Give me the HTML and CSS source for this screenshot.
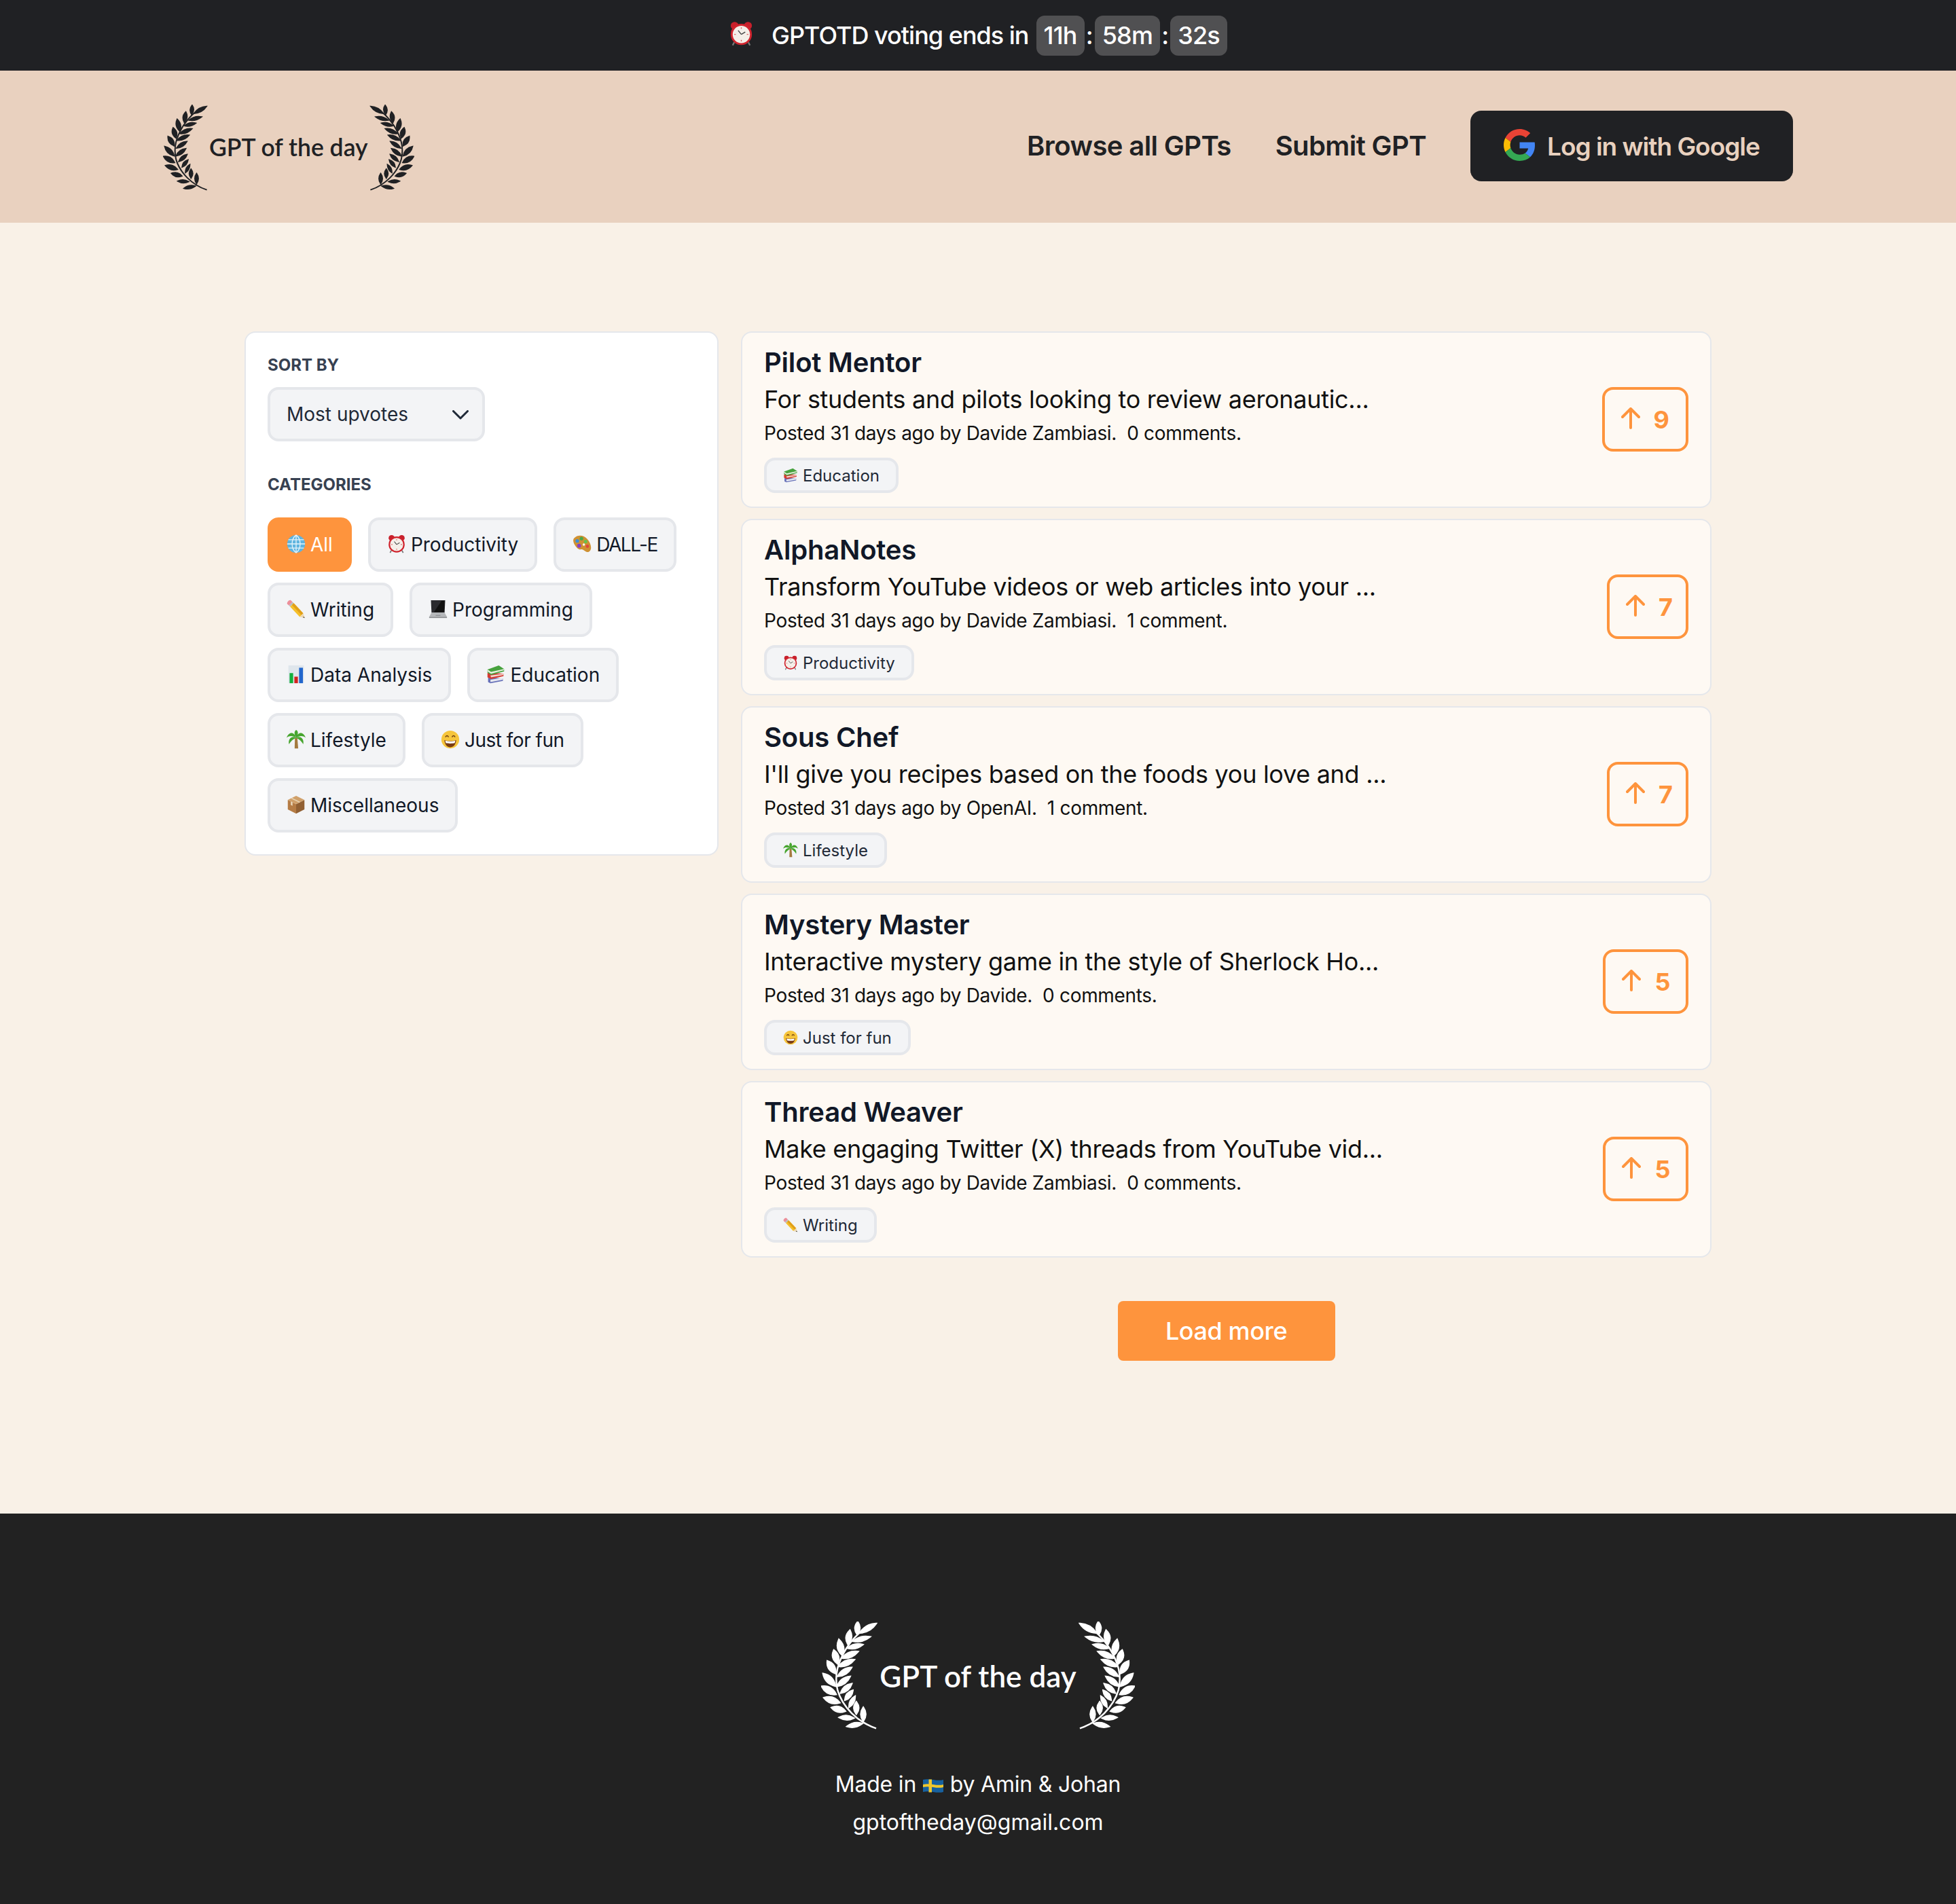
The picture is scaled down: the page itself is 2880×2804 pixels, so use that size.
FILE: index.html
```html
<!DOCTYPE html>
<html lang="en">
<head>
<meta charset="utf-8">
<title>GPT of the day</title>
<link rel="stylesheet" href="styles.css">
</head>
<body>
<svg class="defs" width="0" height="0" aria-hidden="true">
  <defs>
    <symbol id="wreath" viewBox="120 95 200 386">
      <path class="stem" d="M316 477C250 455 195 400 178 340C165 285 180 240 210 190C230 160 255 130 290 112"/>
      <path d="M258 135Q295 133 315 103Q279 105 258 135ZM248 140Q265 118 250 97Q233 118 248 140ZM235 165Q267 171 293 150Q260 144 235 165ZM215 175Q236 153 222 127Q200 148 215 175ZM215 190Q244 197 267 178Q238 170 215 190ZM195 215Q208 183 183 160Q169 191 195 215ZM195 225Q228 229 250 203Q216 199 195 225ZM178 245Q190 216 165 198Q152 226 178 245ZM183 255Q216 258 237 232Q204 228 183 255ZM170 280Q173 247 142 237Q139 269 170 280ZM180 290Q212 288 227 260Q195 261 180 290ZM170 325Q162 289 127 282Q134 317 170 325ZM178 325Q209 321 222 292Q190 295 178 325ZM172 355Q157 323 122 327Q137 358 172 355ZM190 350Q219 346 228 318Q199 322 190 350ZM185 385Q163 357 130 368Q151 395 185 385ZM205 375Q229 367 232 342Q207 349 205 375ZM220 400Q240 387 240 363Q219 375 220 400ZM205 415Q185 391 157 403Q176 426 205 415ZM245 425Q261 404 245 383Q229 404 245 425ZM235 440Q210 425 185 438Q210 453 235 440ZM270 450Q286 426 270 403Q254 426 270 450ZM265 460Q241 478 213 470Q236 451 265 460Z"/>
    </symbol>
    <symbol id="e-clock" viewBox="0 0 32 32">
      <circle cx="7.5" cy="6" r="5" fill="#c8202c"/><circle cx="24.5" cy="6" r="5" fill="#c8202c"/>
      <path d="M7 27l-2 4M25 27l2 4" stroke="#777" stroke-width="2"/>
      <circle cx="16" cy="17" r="13.500" fill="#d0242e"/><circle cx="16" cy="17" r="11" fill="#f4efe9"/>
      <path d="M16 17l-4-5M16 17l5-3" stroke="#444" stroke-width="1.2" fill="none"/>
      <path d="M16 8v2M16 24v2M7 17h2M23 17h2" stroke="#d66" stroke-width="1.2"/>
    </symbol>
    <symbol id="e-globe" viewBox="0 0 32 32">
      <circle cx="16" cy="16" r="15" fill="#5fb4df"/>
      <path d="M1 16h30M3 9h26M3 23h26M16 1v30M16 1c-9 7-9 23 0 30M16 1c9 7 9 23 0 30" stroke="#e4f3fa" stroke-width="1.5" fill="none"/>
    </symbol>
    <symbol id="e-palette" viewBox="0 0 32 32">
      <path d="M3 6c6-6 16-5 22 2s8 16 4 20-8 0-11-2-5 1-9-2S-2 11 3 6z" fill="#cf9133"/>
      <circle cx="8" cy="11" r="3" fill="#3c8fd8"/><circle cx="15" cy="7" r="3" fill="#4aa84a"/><circle cx="22" cy="12" r="3" fill="#6ac04a"/><circle cx="11" cy="19" r="3.300" fill="#8a3fc0"/><circle cx="25" cy="20" r="2.800" fill="#e0483c"/><circle cx="19" cy="17" r="2" fill="#fff"/>
    </symbol>
    <symbol id="e-pencil" viewBox="0 0 32 32">
      <path d="M1 7c-1-2 3-7 6-6l3 3-6 6z" fill="#ec8f9a"/><path d="M4 10l6-6 2 2-6 6z" fill="#b9bcc0"/>
      <path d="M6 12l6-6 16 17-6 6z" fill="#f5bf2a"/><path d="M9 9l3-3 16 17-3 3z" fill="#e09f1a"/>
      <path d="M22 29l6-6 3 8z" fill="#eed9b5"/><path d="M28.500 28.500l2.500 2.500-3.500-1z" fill="#333"/>
    </symbol>
    <symbol id="e-laptop" viewBox="0 0 32 32">
      <path d="M4 1h24l-1 21H5z" fill="#2a2a2e"/><path d="M22 2l5 0-1 19H9z" fill="#111"/><path d="M5 22h22l4 7H1z" fill="#b5b7ba"/><path d="M1 29h30v2H1z" fill="#8a8c8f"/><path d="M12 26h8v1.500h-8z" fill="#8f9194"/>
    </symbol>
    <symbol id="e-chart" viewBox="0 0 32 32">
      <path d="M3 1h26v30H3z" fill="#dfe6ec"/><path d="M5 14h6v17H5z" fill="#12b03c"/><path d="M13 20h6v11h-6z" fill="#d2231f"/><path d="M21 5h6.500v26H21z" fill="#2266cc"/>
    </symbol>
    <symbol id="e-books" viewBox="0 0 32 32">
      <path d="M3 22l3-1 22 2v4L7 31l-4-2z" fill="#6670b8"/><path d="M7 25l21-3v3L7 29z" fill="#e6e8f0"/>
      <path d="M2 14l4-1 23 2v4L8 24l-6-3z" fill="#d43b32"/><path d="M7 18l22-3v2L8 21z" fill="#f3d8d0"/>
      <path d="M2 8L21 1l9 6v4L8 17l-6-4z" fill="#47a23e"/><path d="M2 8l6 4L30 7v2L8 15l-6-4z" fill="#e8f0e0"/>
    </symbol>
    <symbol id="e-palm" viewBox="0 0 32 32">
      <path d="M14 13h4l1.500 18h-6z" fill="#a57a3f"/>
      <path d="M16 13C13 3 4 2 0 13c5-4 11-3 16 0zM16 13c3-10 12-11 16 0-5-4-11-3-16 0zM16 13C12 6 13 2 16 0c4 2 4 7 0 13zM16 13C9 9 2 15 4 24c3-5 7-9 12-11zM16 13c7-4 14 2 12 11-3-5-7-9-12-11z" fill="#47a52f"/>
    </symbol>
    <symbol id="e-grin" viewBox="0 0 32 32">
      <circle cx="16" cy="16" r="15" fill="#f6c53c"/>
      <path d="M6 17c5 2 15 2 20 0-1 8-5 12-10 12S7 25 6 17z" fill="#7a3b12"/><path d="M7.500 18c5 1.500 12 1.500 17 0l-1 4c-4 1-11 1-15 0z" fill="#fff"/>
      <path d="M8 12c1-3 4-3 5 0M19 12c1-3 4-3 5 0" stroke="#6a3a10" stroke-width="1.800" fill="none"/>
    </symbol>
    <symbol id="e-box" viewBox="0 0 32 32">
      <path d="M2 8l14 7v16L2 24z" fill="#b57c45"/><path d="M16 15l14-7v16l-14 7z" fill="#916033"/><path d="M2 8l14-7 14 7-14 7z" fill="#d0a06a"/><path d="M9 4.500l14 7-1.500 1L7 5.500z" fill="#e8d6b8"/><path d="M7 10.500l3 1.500v6l-3-1.500z" fill="#e8d6b8"/>
    </symbol>
    <symbol id="e-flag" viewBox="0 0 32 24">
      <path d="M1 3c10-3 20 3 30 0v18c-10 3-20-3-30 0z" fill="#17619f"/>
      <path d="M9.500 2.500h4.500v19H9.500z" fill="#f0c72c"/><path d="M1 10c10-3 20 3 30 0v4c-10 3-20-3-30 0z" fill="#f0c72c"/>
    </symbol>
    <symbol id="arrow" viewBox="0 0 28 32">
      <path d="M14 30V3M2 14L14 2l12 12" fill="none" stroke="currentColor" stroke-width="4" stroke-linecap="round" stroke-linejoin="round"/>
    </symbol>
  </defs>
</svg>

<div class="topbar">
  <svg class="top-emoji"><use href="#e-clock"/></svg>
  <span class="top-text">GPTOTD voting ends in</span>
  <span class="time">11h</span><span class="colon">:</span>
  <span class="time">58m</span><span class="colon">:</span>
  <span class="time">32s</span>
</div>

<header class="header">
  <a class="logo">
    <svg class="wreath"><use href="#wreath"/></svg>
    <span class="logo-text">GPT of the day</span>
    <svg class="wreath flip"><use href="#wreath"/></svg>
  </a>
  <nav class="nav">
    <a class="nav-link">Browse all GPTs</a>
    <a class="nav-link">Submit GPT</a>
    <a class="login">
      <svg class="g-icon" viewBox="0 0 48 48">
        <path fill="#EA4335" d="M24 9.500c3.540 0 6.710 1.220 9.210 3.600l6.850-6.850C35.900 2.380 30.470 0 24 0 14.620 0 6.510 5.380 2.560 13.220l7.980 6.190C12.430 13.720 17.740 9.500 24 9.500z"/>
        <path fill="#4285F4" d="M46.980 24.550c0-1.570-.15-3.090-.38-4.550H24v9.020h12.940c-.58 2.960-2.260 5.480-4.780 7.180l7.730 6c4.510-4.180 7.090-10.360 7.090-17.650z"/>
        <path fill="#FBBC05" d="M10.530 28.590c-.48-1.450-.76-2.990-.76-4.590s.27-3.140.76-4.590l-7.980-6.190C.92 16.460 0 20.120 0 24c0 3.880.92 7.540 2.560 10.780l7.970-6.190z"/>
        <path fill="#34A853" d="M24 48c6.480 0 11.930-2.130 15.890-5.810l-7.730-6c-2.150 1.450-4.920 2.300-8.160 2.300-6.260 0-11.570-4.220-13.470-9.910l-7.980 6.190C6.510 42.620 14.620 48 24 48z"/>
      </svg>
      <span>Log in with Google</span>
    </a>
  </nav>
</header>

<main class="main">
  <aside class="sidebar">
    <div class="label sort-label">SORT BY</div>
    <div class="select"><span>Most upvotes</span>
      <svg class="chev" viewBox="0 0 24 14"><path d="M1.500 1.500L12 12 22.500 1.500" fill="none" stroke="#1f2937" stroke-width="3" stroke-linecap="round" stroke-linejoin="round"/></svg>
    </div>
    <div class="label cat-label">CATEGORIES</div>
    <div class="chips">
      <a class="chip active"><svg class="emo"><use href="#e-globe"/></svg>All</a>
      <a class="chip"><svg class="emo"><use href="#e-clock"/></svg>Productivity</a>
      <a class="chip"><svg class="emo"><use href="#e-palette"/></svg><span class="tight">DALL-E</span></a>
      <a class="chip"><svg class="emo"><use href="#e-pencil"/></svg>Writing</a>
      <a class="chip"><svg class="emo"><use href="#e-laptop"/></svg>Programming</a>
      <a class="chip"><svg class="emo"><use href="#e-chart"/></svg>Data Analysis</a>
      <a class="chip"><svg class="emo"><use href="#e-books"/></svg>Education</a>
      <a class="chip"><svg class="emo"><use href="#e-palm"/></svg>Lifestyle</a>
      <a class="chip"><svg class="emo"><use href="#e-grin"/></svg><span class="narrow">Just for fun</span></a>
      <a class="chip"><svg class="emo"><use href="#e-box"/></svg>Miscellaneous</a>
    </div>
  </aside>

  <section class="list">
    <article class="card">
      <div class="card-body">
        <h2 class="title">Pilot Mentor</h2>
        <p class="desc">For students and pilots looking to review aeronautic...</p>
        <p class="meta">Posted 31 days ago by Davide Zambiasi.&nbsp; 0 comments.</p>
        <a class="tag"><svg class="tag-emo"><use href="#e-books"/></svg>Education</a>
      </div>
      <button class="vote"><svg class="arrow"><use href="#arrow"/></svg><span>9</span></button>
    </article>
    <article class="card">
      <div class="card-body">
        <h2 class="title">AlphaNotes</h2>
        <p class="desc">Transform YouTube videos or web articles into your ...</p>
        <p class="meta">Posted 31 days ago by Davide Zambiasi.&nbsp; 1 comment.</p>
        <a class="tag"><svg class="tag-emo"><use href="#e-clock"/></svg>Productivity</a>
      </div>
      <button class="vote"><svg class="arrow"><use href="#arrow"/></svg><span class="n7">7</span></button>
    </article>
    <article class="card">
      <div class="card-body">
        <h2 class="title">Sous Chef</h2>
        <p class="desc">I'll give you recipes based on the foods you love and ...</p>
        <p class="meta">Posted 31 days ago by OpenAI.&nbsp; 1 comment.</p>
        <a class="tag"><svg class="tag-emo"><use href="#e-palm"/></svg>Lifestyle</a>
      </div>
      <button class="vote"><svg class="arrow"><use href="#arrow"/></svg><span class="n7">7</span></button>
    </article>
    <article class="card">
      <div class="card-body">
        <h2 class="title">Mystery Master</h2>
        <p class="desc">Interactive mystery game in the style of Sherlock Ho...</p>
        <p class="meta">Posted 31 days ago by Davide.&nbsp; 0 comments.</p>
        <a class="tag"><svg class="tag-emo"><use href="#e-grin"/></svg>Just for fun</a>
      </div>
      <button class="vote"><svg class="arrow"><use href="#arrow"/></svg><span class="n5">5</span></button>
    </article>
    <article class="card">
      <div class="card-body">
        <h2 class="title">Thread Weaver</h2>
        <p class="desc">Make engaging Twitter (X) threads from YouTube vid...</p>
        <p class="meta">Posted 31 days ago by Davide Zambiasi.&nbsp; 0 comments.</p>
        <a class="tag"><svg class="tag-emo"><use href="#e-pencil"/></svg>Writing</a>
      </div>
      <button class="vote"><svg class="arrow"><use href="#arrow"/></svg><span class="n5">5</span></button>
    </article>
    <button class="load-more">Load more</button>
  </section>
</main>

<footer class="footer">
  <a class="foot-logo">
    <svg class="foot-wreath"><use href="#wreath"/></svg>
    <span class="foot-logo-text">GPT of the day</span>
    <svg class="foot-wreath flip"><use href="#wreath"/></svg>
  </a>
  <p class="foot-line first">Made in <svg class="flag"><use href="#e-flag"/></svg> by Amin &amp; Johan</p>
  <p class="foot-line">gptoftheday@gmail.com</p>
</footer>
</body>
</html>
```

FILE: styles.css
```css
* { box-sizing: border-box; }
html, body { margin: 0; padding: 0; }
body {
  background: #f9f1e7;
  color: #111827;
  font-family: Inter, "Liberation Sans", sans-serif;
}
.defs { position: absolute; }
p, h2 { margin: 0; }
button { font-family: inherit; cursor: pointer; }

.topbar {
  height: 104px;
  background: #202124;
  color: #fff;
  display: flex;
  align-items: center;
  justify-content: center;
  font-size: 36px;
  font-weight: 500;
}
.top-emoji { width: 37px; height: 37px; margin-right: 26px; margin-top: -6px; }
.top-text { margin-right: 11px; letter-spacing: -1px; }
.time {
  height: 59px;
  padding: 0 11px;
  background: #505052;
  border-radius: 12px;
  display: flex;
  align-items: center;
  letter-spacing: -0.8px;
}
.colon { width: 15px; text-align: center; }

.header {
  height: 224px;
  background: #e9d1bf;
  padding: 0 240px;
  display: flex;
  align-items: center;
  justify-content: space-between;
}
.logo { display: flex; align-items: center; gap: 2px; color: #202124; margin-top: 2px; }
.wreath { width: 66px; height: 127px; fill: #202124; stroke: #202124; stroke-width: 5px; }
.stem { fill: none; stroke-width: 6px; }
.flip { transform: scaleX(-1); }
.logo-text {
  font-family: Lato, sans-serif;
  font-weight: 600;
  font-size: 35.5px;
  line-height: 1;
}
.nav { display: flex; align-items: center; gap: 65px; margin-top: -2px; }
.nav-link { font-size: 40px; font-weight: 600; color: #202124; letter-spacing: -0.6px; margin-top: -2px; }
.login {
  width: 475px;
  height: 104px;
  background: #202124;
  color: #e9d1bf;
  border-radius: 16px;
  display: flex;
  align-items: center;
  padding-left: 49px;
  gap: 17px;
  font-size: 37px;
  font-weight: 600;
  letter-spacing: -1px;
}
.g-icon { width: 47px; height: 47px; margin-top: -4px; }

.main {
  height: 1901px;
  padding: 160px 360px 0;
  display: flex;
  align-items: flex-start;
  gap: 33px;
}
.sidebar {
  width: 698px;
  flex: none;
  height: 772px;
  background: #fff;
  border: 2px solid #e5e7eb;
  border-radius: 16px;
  padding: 32px;
}
.label {
  font-size: 24px;
  line-height: 32px;
  font-weight: 700;
  color: #374151;
}
.select {
  width: 320px;
  height: 80px;
  margin-top: 16px;
  background: #f3f4f6;
  border: 4px solid #e5e7eb;
  border-radius: 16px;
  padding: 0 20px 0 24px;
  display: flex;
  align-items: center;
  justify-content: space-between;
  font-size: 28px;
  color: #1f2937;
}
.chev { width: 24px; height: 14px; margin-top: 2px; }
.cat-label { margin-top: 48px; }
.chips { display: flex; flex-wrap: wrap; gap: 16px 24px; margin-top: 32px; }
.chip {
  height: 80px;
  padding: 0 24px;
  background: #f3f4f6;
  border: 4px solid #e5e7eb;
  border-radius: 16px;
  display: flex;
  align-items: center;
  gap: 7px;
  font-size: 28px;
  color: #111827;
}
.chip.active { background: #fe943d; border-color: #fe943d; color: #fff; }
.emo { width: 28px; height: 28px; margin-top: -2px; }
.tight { letter-spacing: -1.5px; }
.narrow { letter-spacing: -0.5px; }

.list { flex: 1; display: flex; flex-direction: column; gap: 16px; }
.card {
  height: 260px;
  background: #fef9f3;
  border: 2px solid #e5e7eb;
  border-radius: 16px;
  padding: 20px 32px;
  display: flex;
  align-items: center;
  justify-content: space-between;
}
.card-body { display: flex; flex-direction: column; align-items: flex-start; }
.title { font-size: 40px; line-height: 48px; font-weight: 600; color: #111827; letter-spacing: -0.2px; margin-bottom: 2px; }
.desc { font-size: 36px; line-height: 56px; color: #111; letter-spacing: -0.3px; margin-bottom: 2px; }
.meta { font-size: 28px; line-height: 40px; color: #111; letter-spacing: -0.32px; margin-bottom: 16px; }
.tag {
  height: 52px;
  padding: 0 24px;
  background: #f3f4f6;
  border: 4px solid #e5e7eb;
  border-radius: 16px;
  display: flex;
  align-items: center;
  gap: 7px;
  font-size: 24px;
  color: #1f2937;
}
.tag-emo { width: 22px; height: 22px; }
.vote {
  height: 95px;
  margin-bottom: 1px;
  padding: 0 24px;
  background: transparent;
  border: 4px solid #fe943d;
  border-radius: 16px;
  color: #fe943d;
  display: flex;
  align-items: center;
  gap: 20px;
  font-size: 36px;
  font-weight: 700;
}
.n7 { letter-spacing: -5px; }
.n5 { letter-spacing: -1.5px; }
.arrow { width: 28px; height: 32px; margin-top: -4px; }
.load-more {
  align-self: center;
  margin-top: 48px;
  width: 320px;
  height: 88px;
  background: #fe943d;
  border: 0;
  border-radius: 8px;
  color: #fff;
  font-size: 36px;
  font-weight: 500;
  letter-spacing: -0.4px;
}

.footer {
  height: 575px;
  background: #222;
  color: #fff;
  padding-top: 159px;
  display: flex;
  flex-direction: column;
  align-items: center;
  font-size: 32px;
}
.foot-logo { display: flex; align-items: center; gap: 3px; }
.foot-wreath { width: 83px; height: 159px; fill: #fff; stroke: #fff; stroke-width: 7px; }
.foot-wreath .stem { stroke-width: 5px; }
.foot-logo-text { font-family: Lato, sans-serif; font-weight: 600; font-size: 44px; line-height: 1; }
.foot-line { line-height: 56px; }
.foot-line.first { margin-top: 53px; letter-spacing: -0.2px; }
.flag { width: 32px; height: 24px; vertical-align: -3px; }
```
